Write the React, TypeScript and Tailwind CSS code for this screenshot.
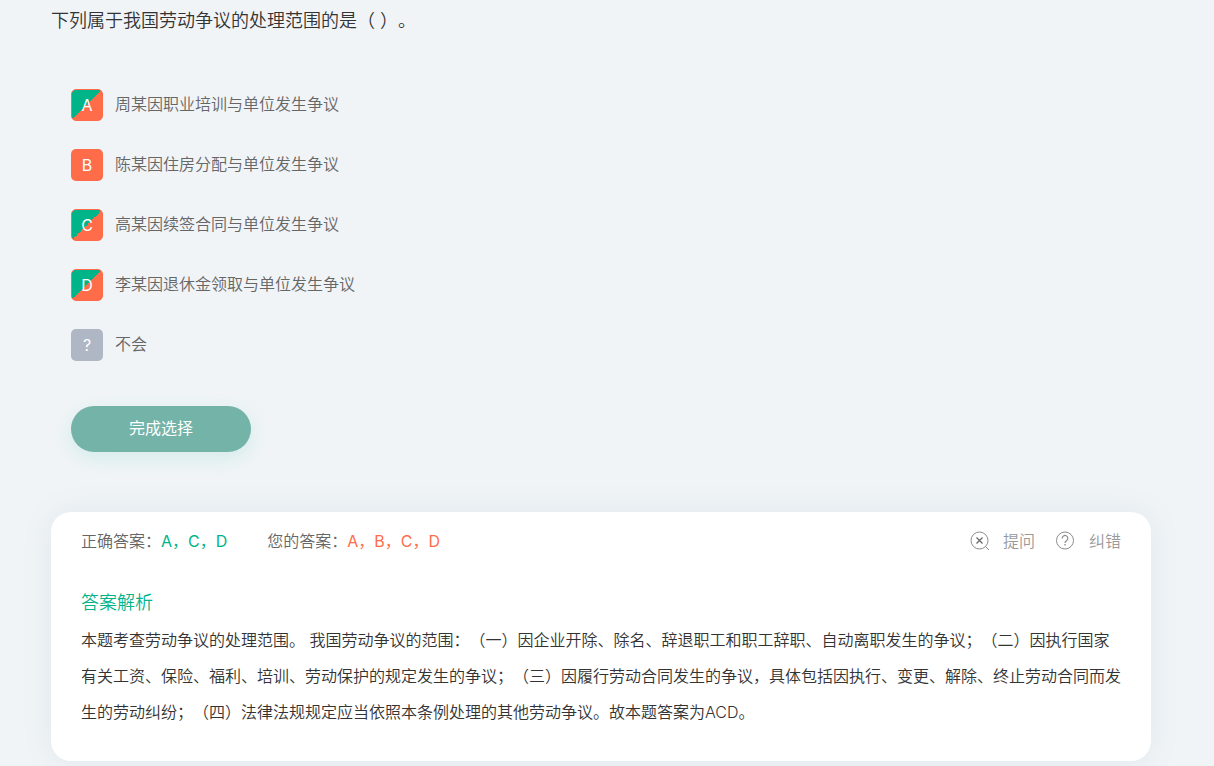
import { useState } from "react";

type Status = "missed" | "wrong" | "unsure";

const options: { key: string; text: string; status: Status }[] = [
  { key: "A", text: "周某因职业培训与单位发生争议", status: "missed" },
  { key: "B", text: "陈某因住房分配与单位发生争议", status: "wrong" },
  { key: "C", text: "高某因续签合同与单位发生争议", status: "missed" },
  { key: "D", text: "李某因退休金领取与单位发生争议", status: "missed" },
  { key: "?", text: "不会", status: "unsure" },
];

const badgeStyles: Record<Status, string> = {
  missed:
    "border border-[#ff6c4a] bg-[linear-gradient(135deg,#00b48a_50%,#ff6c4a_50%)]",
  wrong: "bg-[#ff6c4a]",
  unsure: "bg-[#afb6c4]",
};

function AskIcon() {
  return (
    <svg width="20" height="20" viewBox="0 0 20 20" fill="none" stroke="#8c8c8c">
      <circle cx="10.5" cy="9.5" r="8.5" />
      <path d="M16.5 15.5 20 19" />
      <path d="M7.5 6.5l6 6M13.5 6.5l-6 6" stroke="#666" strokeWidth="1.2" />
    </svg>
  );
}

function ReportIcon() {
  return (
    <svg width="20" height="20" viewBox="0 0 20 20" fill="none" stroke="#8c8c8c">
      <circle cx="10" cy="9.5" r="8.5" />
      <path d="M7.2 7.4a2.8 2.8 0 1 1 4.4 2.2c-1 .7-1.6 1.1-1.6 2.3" strokeWidth="1.2" />
      <path d="M10 13v1.4" strokeWidth="1.3" />
    </svg>
  );
}

export default function App() {
  const [selected, setSelected] = useState(["A", "B", "C", "D"]);

  const toggle = (key: string) =>
    setSelected((prev) =>
      prev.includes(key) ? prev.filter((k) => k !== key) : [...prev, key],
    );

  return (
    <div className="min-h-screen bg-[#f0f4f7] pr-3 font-['Inter','Noto_Sans_CJK_SC',sans-serif] text-base font-[350] [text-spacing-trim:space-all]">
      <main className="mx-auto max-w-[1100px] pt-[5px]">
        <h1 className="text-lg leading-8 font-[350] text-[#333]">
          下列属于我国劳动争议的处理范围的是（ ）。
        </h1>

        <div className="mt-[52px] flex flex-col items-start gap-7 px-5">
          {options.map((option) => (
            <label key={option.key} className="flex cursor-pointer items-center gap-3 text-[#666]">
              <input
                type="checkbox"
                className="sr-only"
                checked={selected.includes(option.key)}
                onChange={() => toggle(option.key)}
              />
              <span
                className={`flex size-8 items-center justify-center rounded-[5px] font-normal text-white ${badgeStyles[option.status]}`}
              >
                {option.key}
              </span>
              <span className="pb-0.5">{option.text}</span>
            </label>
          ))}
        </div>

        <button
          type="button"
          className="mt-[45px] ml-5 h-[46px] w-[180px] rounded-full bg-[#74b3a8] pb-0.5 font-normal text-white shadow-[0_6px_20px_rgba(0,180,138,0.12)]"
        >
          完成选择
        </button>

        <section className="mt-[60px] rounded-[20px] bg-white px-[30px] pt-[13px] pb-[31px] shadow-[0_0_30px_rgba(100,130,150,0.1)]">
          <div className="flex h-8 items-center justify-between">
            <div className="flex gap-10 text-[#666]">
              <p>
                正确答案：<span className="font-normal text-[#00b48a]">A，C，D</span>
              </p>
              <p>
                您的答案：<span className="font-normal text-[#ff6c4a]">A，B，C，D</span>
              </p>
            </div>
            <div className="flex gap-5 text-[#999]">
              <button type="button" className="flex items-center gap-[14px]">
                <AskIcon />
                提问
              </button>
              <button type="button" className="flex items-center gap-[14px]">
                <ReportIcon />
                纠错
              </button>
            </div>
          </div>

          <h2 className="mt-[30px] text-lg leading-8 font-[350] text-[#00b48a]">答案解析</h2>
          <p className="mt-[3px] leading-9 text-[#333]">
            本题考查劳动争议的处理范围。
            我国劳动争议的范围：（一）因企业开除、除名、辞退职工和职工辞职、自动离职发生的争议；（二）因执行国家有关工资、保险、福利、培训、劳动保护的规定发生的争议；（三）因履行劳动合同发生的争议，具体包括因执行、变更、解除、终止劳动合同而发生的劳动纠纷；（四）法律法规规定应当依照本条例处理的其他劳动争议。故本题答案为ACD。
          </p>
        </section>
      </main>
    </div>
  );
}
